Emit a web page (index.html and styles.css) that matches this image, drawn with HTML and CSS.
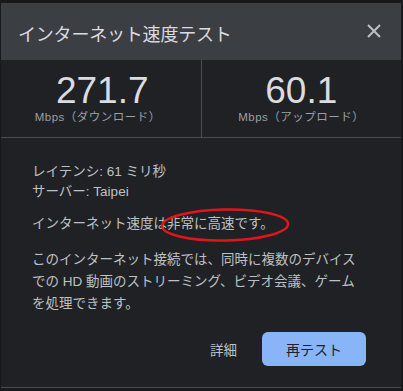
FILE: index.html
```html
<!DOCTYPE html>
<html lang="ja">
<head>
  <meta charset="UTF-8" />
  <title>インターネット速度テスト</title>
  <link rel="stylesheet" href="styles.css">
</head>
<body>

  <div class="dialog">
    <header class="dialog-head">
      <h1>インターネット速度テスト</h1>
      <button class="close" aria-label="閉じる">
        <svg width="14" height="14" viewBox="0 0 14 14"><path d="M1 1L13 13M13 1L1 13" stroke="#bdc1c6" stroke-width="2"/></svg>
      </button>
    </header>

    <section class="stats">
      <div class="stat">
        <div class="num">271.7</div>
        <div class="label">Mbps（ダウンロード）</div>
      </div>
      <div class="stat">
        <div class="num">60.1</div>
        <div class="label">Mbps（アップロード）</div>
      </div>
    </section>

    <section class="info">
      <p class="meta">レイテンシ: 61 ミリ秒<br>サーバー: Taipei</p>
      <p class="speed">インターネット速度は非常に高速です。
        <svg class="mark" width="132" height="37" viewBox="0 0 132 37"><ellipse cx="66" cy="18" rx="63" ry="15.5" transform="rotate(-1 66 18)" fill="none" stroke="#e0161c" stroke-width="2.5"/></svg>
      </p>
      <p class="desc">このインターネット接続では、同時に複数のデバイスでの HD 動画のストリーミング、ビデオ会議、ゲームを処理できます。</p>

      <div class="actions">
        <button class="link">詳細</button>
        <button class="primary">再テスト</button>
      </div>
    </section>
  </div>

</body>
</html>
```

FILE: styles.css
```css
* { margin: 0; padding: 0; box-sizing: border-box; }
body { background: #18191b; font-family: "Liberation Sans", "Noto Sans CJK JP", sans-serif; color: #bdc1c6; }
.dialog { margin: 3px 2px 0 1px; background: #202124; border-bottom: 1px solid #4a4d51; height: 385px; }
.dialog-head { background: #3b3e42; height: 57px; display: flex; align-items: center; justify-content: space-between; padding: 2px 20px 0 17px; }
.dialog-head h1 { font-size: 18px; font-weight: normal; color: #dadce0; letter-spacing: -0.2px; }
.close { background: none; border: none; width: 14px; height: 14px; display: flex; margin-top: -3px; }
.stats { display: flex; border-bottom: 1px solid #4a4d51; height: 78px; }
.stat { flex: 1; text-align: center; padding-top: 12px; }
.stat + .stat { border-left: 1px solid #4a4d51; }
.num { font-size: 37px; line-height: 38px; color: #dadce0; }
.stat:first-child .num { margin-left: 3px; }
.label { font-size: 11.5px; line-height: 14px; color: #9aa0a6; letter-spacing: 0.5px; }
.stat:first-child .label { margin-left: -6px; }
.info { padding: 24px 40px 0 31px; font-size: 13.5px; }
.meta { line-height: 20px; }
.speed { line-height: 20px; margin-top: 12px; position: relative; }
.mark { position: absolute; left: 127px; top: -7px; }
.desc { line-height: 22px; margin-top: 15px; }
.actions { display: flex; justify-content: flex-end; align-items: center; gap: 25px; margin: 17px -5px 0 0; }
.link { background: none; border: none; color: #bdc1c6; font-family: inherit; font-size: 13.5px; }
.primary { width: 104px; height: 34px; border: none; border-radius: 6px; background: #8ab4f8; color: #202124; font-family: inherit; font-size: 14px; }
```
